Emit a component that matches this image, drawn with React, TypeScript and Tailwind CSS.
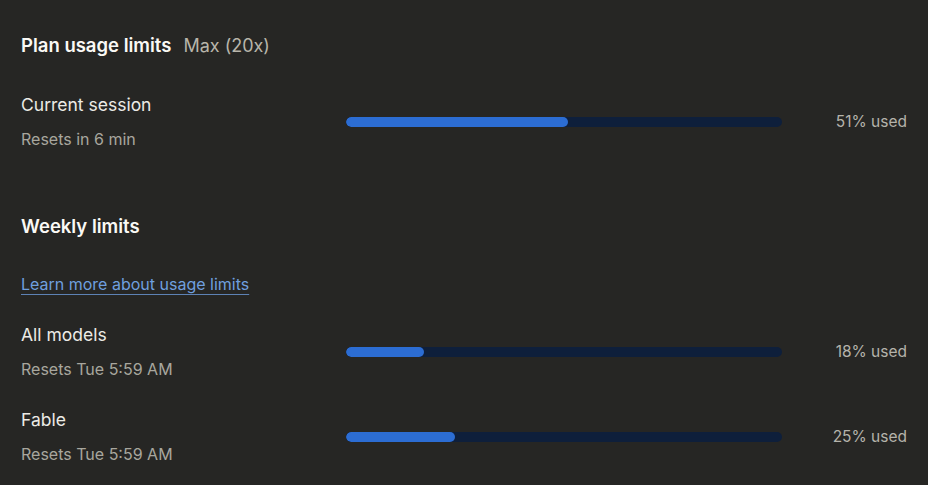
type Limit = {
  name: string;
  resets: string;
  used: number;
};

const session: Limit = { name: 'Current session', resets: 'Resets in 6 min', used: 51 };

const weekly: Limit[] = [
  { name: 'All models', resets: 'Resets Tue 5:59 AM', used: 18 },
  { name: 'Fable', resets: 'Resets Tue 5:59 AM', used: 25 },
];

function UsageRow({ limit }: { limit: Limit }) {
  return (
    <div className="flex items-center">
      <div className="w-[325px] shrink-0">
        <div className="text-[17.5px] leading-6 text-[#ecebe6]">{limit.name}</div>
        <div className="mt-[10px] text-[16px] leading-6 text-[#a8a69e]">{limit.resets}</div>
      </div>
      <div className="h-[10px] w-[436px] shrink-0 overflow-hidden rounded-full bg-[#0e1f3b]">
        <div className="h-full rounded-full bg-[#2c6dd3]" style={{ width: `${limit.used}%` }} />
      </div>
      <div className="flex-1 text-right text-[15.5px] leading-6 text-[#b5b3ab]">{limit.used}% used</div>
    </div>
  );
}

export default function App() {
  return (
    <div
      className="min-h-screen bg-[#262624] px-[21px] pt-[33px] pb-5"
      style={{ fontFamily: 'Inter, "Noto Sans", sans-serif' }}
    >
      <div className="flex items-baseline gap-[12px]">
        <h2 className="text-[18.5px] font-semibold leading-6 text-[#faf9f5]">Plan usage limits</h2>
        <span className="text-[18px] leading-6 text-[#b8b5aa]">Max (20x)</span>
      </div>

      <div className="mt-[35px]">
        <UsageRow limit={session} />
      </div>

      <h2 className="mt-[63px] text-[18.5px] font-semibold leading-6 text-[#faf9f5]">Weekly limits</h2>

      <div className="mt-[34px]">
        <a
          href="#"
          className="text-base leading-6 text-[#6f9fdf] underline decoration-[#5d82b5] underline-offset-4"
        >
          Learn more about usage limits
        </a>
      </div>

      <div className="mt-[27px] flex flex-col gap-[27px]">
        {weekly.map((l) => (
          <UsageRow key={l.name} limit={l} />
        ))}
      </div>
    </div>
  );
}
